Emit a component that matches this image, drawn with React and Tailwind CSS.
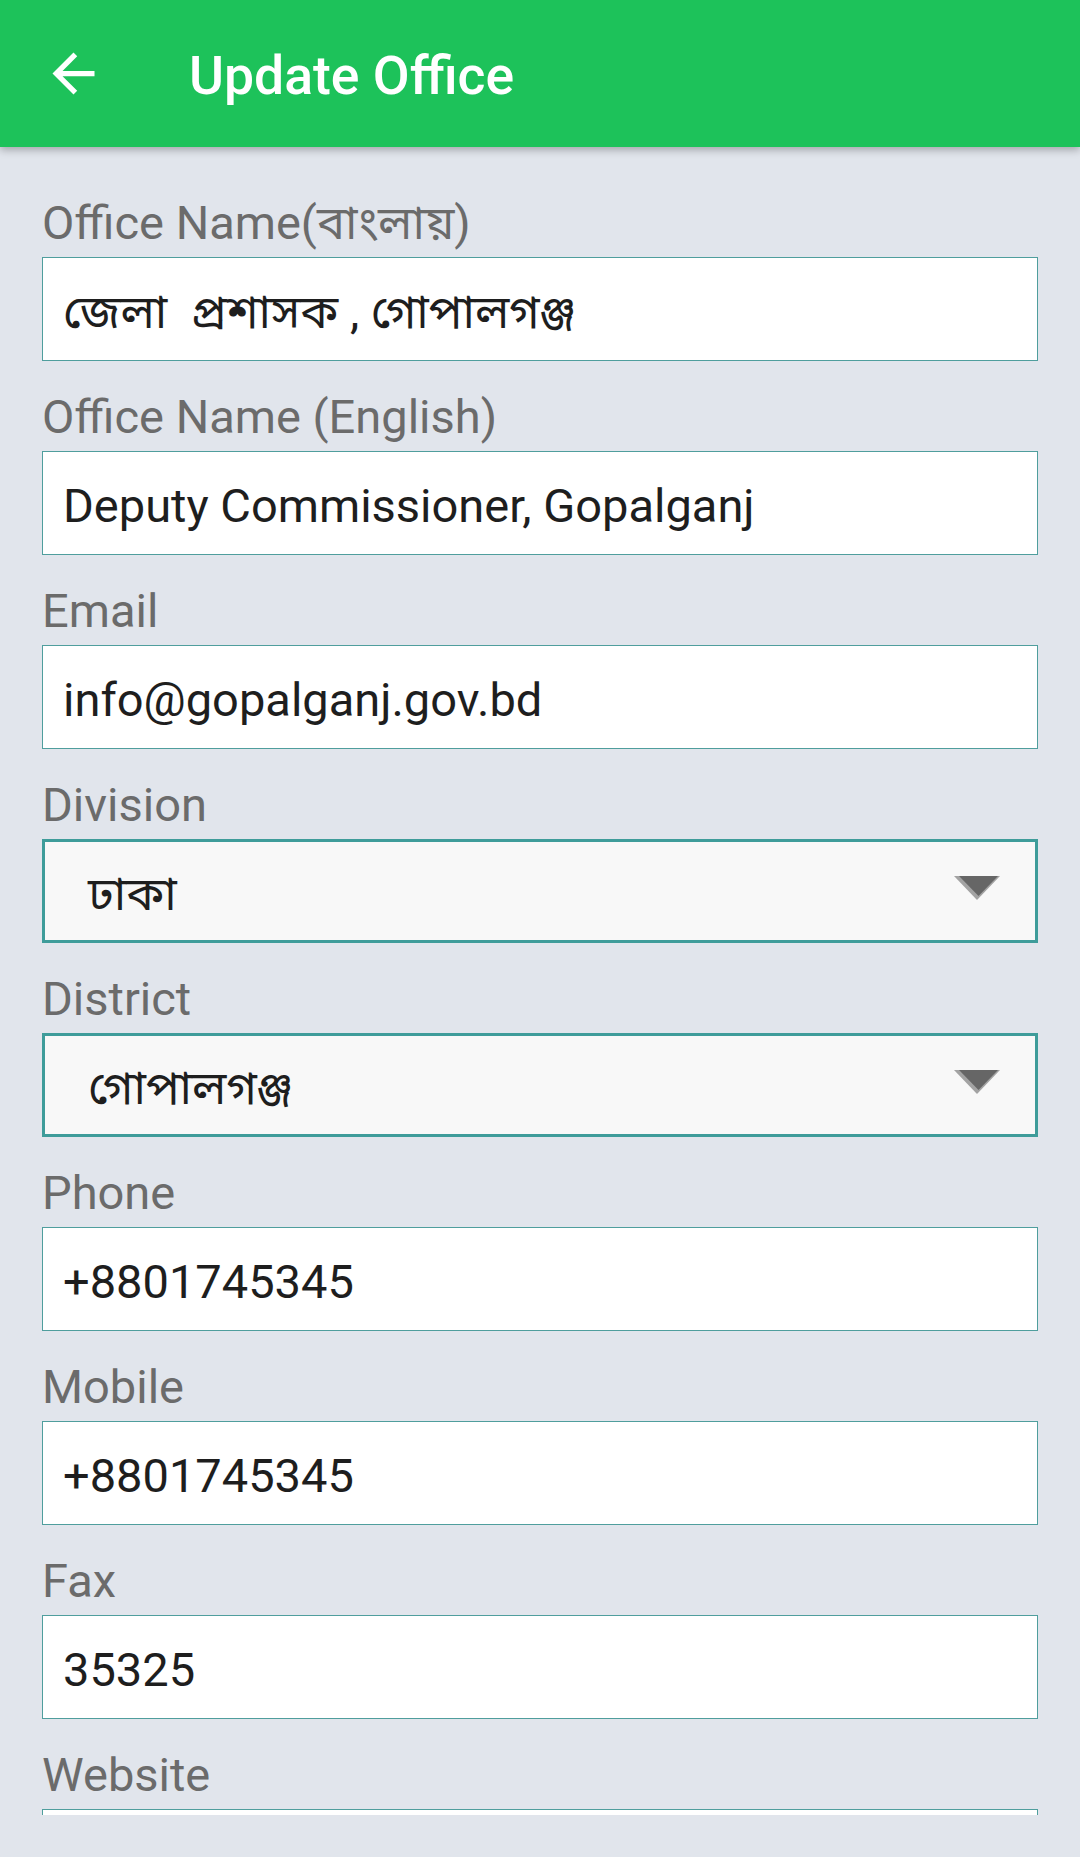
import React from "react";

const FONT = {
  fontFamily:
    'Roboto, "Noto Sans Bengali", "Noto Serif Bengali", "Lohit Bengali", "FreeSans", "FreeSerif", sans-serif',
};

function Label({ children }) {
  return (
    <div className="text-[47px] leading-[56px] text-[#6b6b6b] whitespace-pre">
      {children}
    </div>
  );
}

function TextField({ label, value }) {
  return (
    <div className="mt-[28px]">
      <Label>{label}</Label>
      <div className="mt-[6px] h-[104px] bg-white border border-[#4f9e9d] flex items-center pl-[20px] pt-[6px] text-[47px] leading-[56px] text-[#1e1e1e] whitespace-pre">
        {value}
      </div>
    </div>
  );
}

function Caret() {
  return (
    <svg width="46" height="24" viewBox="0 0 46 24" className="block">
      <polygon points="0,0 46,0 23,24" fill="#a3a3a3" />
      <polygon points="5,0 44,0 24.5,20" fill="#666666" />
    </svg>
  );
}

function SelectField({ label, value }) {
  return (
    <div className="mt-[28px]">
      <Label>{label}</Label>
      <div className="mt-[6px] h-[104px] bg-[#f8f8f8] border-[3px] border-[#3e9c9a] flex items-center justify-between pl-[43px] pr-[35px]">
        <span className="text-[47px] leading-[56px] text-[#1e1e1e] pt-[6px]">
          {value}
        </span>
        <span className="-mt-[6px]">
          <Caret />
        </span>
      </div>
    </div>
  );
}

export default function App() {
  return (
    <div
      className="w-[1080px] h-[1857px] bg-[#e1e5ec] flex flex-col overflow-hidden"
      style={FONT}
    >
      <div className="relative z-10 h-[147px] shrink-0 bg-[#1dc25a] flex items-center pl-[42px] shadow-[0_3px_8px_rgba(0,0,0,0.28)]">
        <svg width="63" height="63" viewBox="0 0 24 24" className="block">
          <path
            d="M20 11H7.83l5.59-5.59L12 4l-8 8 8 8 1.41-1.41L7.83 13H20v-2z"
            fill="#ffffff"
          />
        </svg>
        <div className="ml-[84px] pt-[5px] text-[53.5px] leading-[62px] font-medium text-white">
          Update Office
        </div>
      </div>
      <div className="h-[1668px] shrink-0 overflow-hidden px-[42px] pt-[20px]">
        <TextField label="Office Name(বাংলায়)" value="জেলা  প্রশাসক , গোপালগঞ্জ" />
        <TextField
          label="Office Name (English)"
          value="Deputy Commissioner, Gopalganj"
        />
        <TextField label="Email" value="info@gopalganj.gov.bd" />
        <SelectField label="Division" value="ঢাকা" />
        <SelectField label="District" value="গোপালগঞ্জ" />
        <TextField label="Phone" value="+8801745345" />
        <TextField label="Mobile" value="+8801745345" />
        <TextField label="Fax" value="35325" />
        <TextField label="Website" value="" />
      </div>
    </div>
  );
}
